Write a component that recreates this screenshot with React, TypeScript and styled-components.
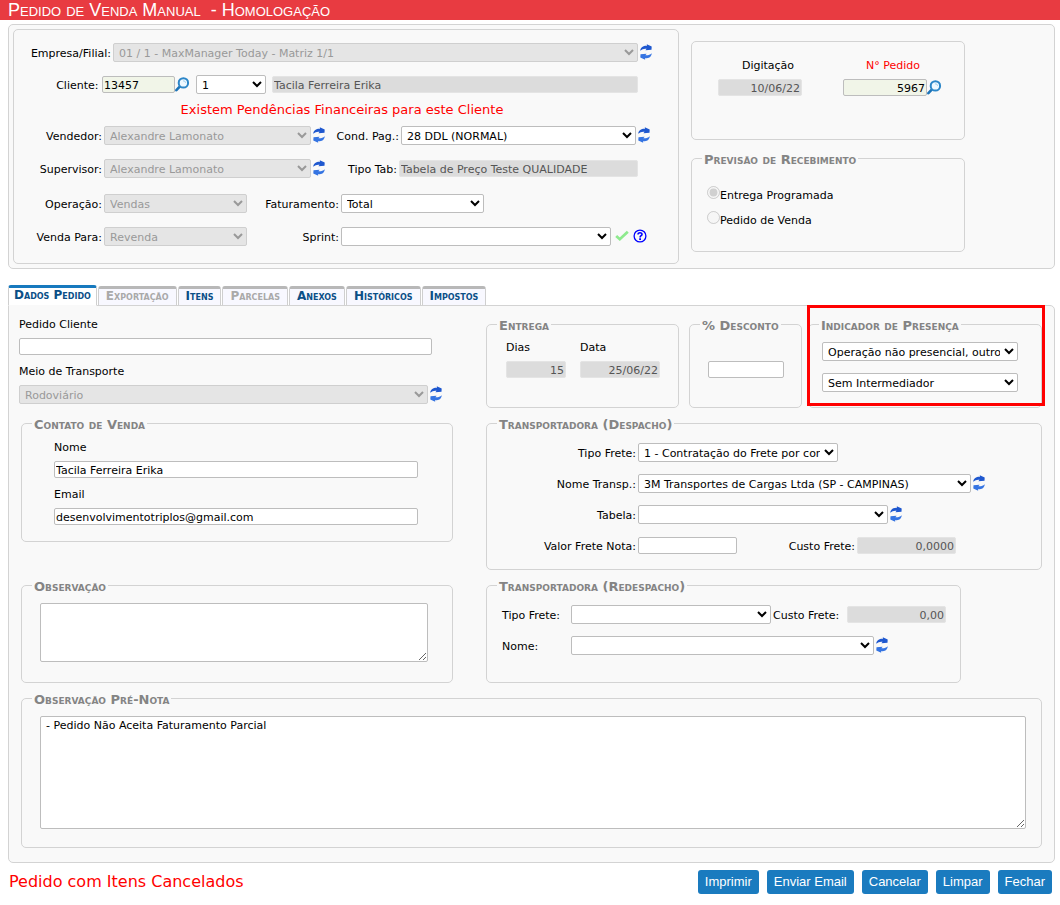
import React from "react";
import styled, { createGlobalStyle, css } from "styled-components";

const GlobalStyle = createGlobalStyle`
  *, *::before, *::after { box-sizing: border-box; }
  body {
    margin: 0;
    background: #fff;
    color: #000;
    font-family: Verdana, "DejaVu Sans", sans-serif;
    font-size: 11px;
    line-height: 16px;
  }
`;

const Header = styled.header`
  height: 20px;
  padding: 0 8px;
  background: #e83b41;
  color: #fff;
  h1 {
    margin: 0;
    font: 18px/20px "Liberation Sans", Arial, sans-serif;
    font-variant: small-caps;
    white-space: pre;
  }
`;

const Page = styled.main`
  padding: 4px 5px 10px 8px;
`;

const panel = css`
  border: 1px solid #d3d3d3;
  border-radius: 5px;
`;

const OrderPanel = styled.section`
  ${panel}
  background: #f9f9f9;
  padding: 4px;
  display: grid;
  grid-template-columns: minmax(0, 666px) minmax(0, 274px);
  column-gap: 12px;
`;

const CustomerPanel = styled.div`
  ${panel}
  padding: 13px 26px 17px 0;
`;

const SideColumn = styled.div`
  padding-top: 12px;
  display: flex;
  flex-direction: column;
  gap: 12px;
`;

const DatesPanel = styled.div`
  ${panel}
  display: flex;
  gap: 25px;
  padding: 15px 20px 43px 26px;
`;

const DateField = styled.div<{ $alert?: boolean }>`
  width: 100px;
  > label {
    display: block;
    padding-top: 1px;
    margin-bottom: 5px;
    text-align: center;
    color: ${(p) => (p.$alert ? "#f00" : "inherit")};
  }
`;

const Fieldset = styled.fieldset`
  ${panel}
  position: relative;
  min-width: 0;
  margin: 0;
  padding: 0;
`;

const Legend = styled.legend`
  margin-left: 10px;
  padding: 2px 2px 0;
  color: #848484;
  font-size: 13px;
  font-weight: bold;
  font-variant: small-caps;
  line-height: 11px;
  white-space: nowrap;
`;

const FieldsetBody = styled.div<{ $pad: string }>`
  padding: ${(p) => p.$pad};
`;

const LegendBox = ({
  title,
  pad,
  children,
  className,
}: {
  title: string;
  pad: string;
  children: React.ReactNode;
  className?: string;
}) => (
  <Fieldset className={className}>
    <Legend>{title}</Legend>
    <FieldsetBody $pad={pad}>{children}</FieldsetBody>
  </Fieldset>
);

const Row = styled.div<{ $gap?: number; $after?: number }>`
  display: flex;
  align-items: center;
  height: 19px;
  gap: ${(p) => p.$gap ?? 2}px;
  margin-bottom: ${(p) => p.$after ?? 0}px;
`;

const Rows = styled.div`
  display: grid;
  row-gap: 12px;
`;

const Group = styled.div`
  display: flex;
  align-items: center;
`;

const Label = styled.label<{ $w: number; $align?: "left" | "right" }>`
  flex: 0 0 ${(p) => p.$w}px;
  padding-top: 2px;
  text-align: ${(p) => p.$align ?? "right"};
  white-space: nowrap;
`;

const TopLabel = styled.label`
  display: block;
  padding-top: 1px;
  margin-bottom: 5px;
`;

const Stack = styled.div`
  display: grid;
  row-gap: 8px;
`;

const TextBox = styled.input<{ $w?: number; $end?: boolean; $key?: boolean }>`
  display: block;
  ${(p) => (p.$w ? `flex: 0 0 ${p.$w}px; width: ${p.$w}px;` : "flex: 1 1 0; width: 100%;")}
  min-width: 0;
  height: 17px;
  margin: 0;
  padding: 1px 1px 0;
  border: 1px solid #bdbdbd;
  border-radius: 2px;
  background: ${(p) => (p.$key ? "#f1f5e8" : "#fff")};
  color: #000;
  font: inherit;
  line-height: 14px;
  text-align: ${(p) => (p.$end ? "right" : "left")};
  &:read-only {
    border-color: #e4e4e4;
    background: #dcdcdc;
    color: #555;
  }
`;

const Select = styled.select<{ $w?: number }>`
  display: block;
  ${(p) => (p.$w ? `flex: 0 1 ${p.$w}px; width: ${p.$w}px;` : "flex: 1 1 0; width: 100%;")}
  min-width: 0;
  height: 19px;
  margin: 0;
  padding: 1px 1px 0;
  border: 1px solid #bdbdbd;
  border-radius: 2px;
  background-color: #fff;
  color: #000;
  font: inherit;
  &:disabled {
    opacity: 1;
    border-color: #cfcfcf;
    background-color: #e5e5e5;
    color: #999;
  }
`;

const TextArea = styled.textarea`
  display: block;
  width: 100%;
  margin: 0;
  padding: 1px 5px;
  border: 1px solid #bdbdbd;
  border-radius: 2px;
  background: #fff;
  font: inherit;
`;

const IconButton = styled.button<{ $w: number }>`
  flex: 0 0 ${(p) => p.$w}px;
  display: flex;
  justify-content: center;
  padding: 0 0 1px;
  border: 0;
  background: none;
  cursor: pointer;
  svg { display: block; flex: none; }
`;

const Notice = styled.p`
  margin: 0 0 6px;
  padding-left: 18px;
  color: #f00;
  font-size: 13px;
  line-height: 20px;
  text-align: center;
`;

const Choice = styled.label`
  display: flex;
  align-items: flex-start;
  height: 16px;
  margin-bottom: 9px;
  &:last-child { margin-bottom: 0; }
  input { width: 13px; height: 13px; margin: 0; }
  span { padding-top: 2px; }
`;

const TabBar = styled.div`
  display: flex;
  gap: 1px;
  margin-top: 16px;
`;

const Tab = styled.button<{ $active?: boolean }>`
  height: ${(p) => (p.$active ? 21 : 20)}px;
  margin: ${(p) => (p.$active ? "0 0 -1px" : "1px 0 -1px")};
  padding: 0 ${(p) => (p.$active ? 5 : 7)}px 3px;
  position: relative;
  border: 1px solid #cfcfcf;
  border-top: 3px solid ${(p) => (p.$active ? "#1779be" : "#b8b8b8")};
  border-bottom-color: ${(p) => (p.$active ? "#f9f9f9" : "#d3d3d3")};
  border-radius: 3px 3px 0 0;
  background: ${(p) => (p.$active ? "#fff" : "#f8f8ff")};
  color: #0b4f87;
  font-family: Verdana, "DejaVu Sans", sans-serif;
  font-size: 12px;
  font-weight: bold;
  font-variant: small-caps;
  line-height: 14px;
  white-space: nowrap;
  &:disabled { color: #a9a9a9; }
`;

const TabPanel = styled.section`
  ${panel}
  border-top-left-radius: 0;
  background: #f9f9f9;
  padding: 0 12px 14px 10px;
`;

const Columns = styled.div`
  display: grid;
  grid-template-columns: minmax(0, 434fr) minmax(0, 556fr);
  column-gap: 33px;
`;

const LeftColumn = styled.div`
  padding-top: 10px;
`;

const RightColumn = styled.div`
  padding-top: 12px;
  display: flex;
  flex-direction: column;
  gap: 9px;
`;

const TransportFields = styled(Stack)`
  padding-right: 11px;
  margin-bottom: 13px;
`;

const LeftBoxes = styled.div`
  display: grid;
  row-gap: 37px;
  margin-left: 2px;
`;

const InvoiceNote = styled.div`
  margin: 9px 0 0 2px;
`;

const Trio = styled.div`
  display: grid;
  grid-template-columns: 193px 113px minmax(0, 1fr);
`;

const DiscountBox = styled(LegendBox)`
  margin: 0 0 0 10px;
  width: 113px;
`;

const PresenceBox = styled(LegendBox)`
  margin-left: 16px;
`;

const DeliveryFields = styled.div`
  display: grid;
  grid-template-columns: 60px 80px;
  column-gap: 14px;
`;

const Spotlight = styled.div`
  position: absolute;
  inset: -26px -4px 1px -2px;
  border: 3px solid #f00;
  pointer-events: none;
`;

const RedispatchBox = styled(LegendBox)`
  width: 475px;
  max-width: 100%;
`;

const Footer = styled.footer`
  display: flex;
  justify-content: space-between;
  align-items: center;
  height: 24px;
  margin-top: 7px;
  padding: 0 3px 0 1px;
  p { margin: 0; color: #f00; font-size: 16px; line-height: 24px; }
`;

const Actions = styled.div`
  display: flex;
  gap: 8px;
`;

const ActionButton = styled.button`
  height: 24px;
  padding: 0 7px;
  border: 0;
  border-radius: 3px;
  background: #1a7bbf;
  color: #fff;
  font: 13px/24px "Liberation Sans", Arial, sans-serif;
  cursor: pointer;
`;

const Refresh = ({ label }: { label: string }) => (
  <IconButton type="button" $w={12} aria-label={label}>
    <svg width="12" height="16" viewBox="0 0 12 16">
      <path d="M0.2 6.8 C0.6 3 3.4 1.5 7 1.7 L6.8 0.2 L11.7 2.6 L11.5 5.8 L5.4 6.2 L6.6 4.8 C4.4 4.4 2.2 5 0.2 6.8 Z" fill="#1f58cf" />
      <path d="M11.8 9.2 C11.4 13 8.6 14.5 5 14.3 L5.2 15.8 L0.3 13.4 L0.5 10.2 L6.6 9.8 L5.4 11.2 C7.6 11.6 9.8 11 11.8 9.2 Z" fill="#3574e2" />
    </svg>
  </IconButton>
);

const Search = ({ label }: { label: string }) => (
  <IconButton type="button" $w={15} aria-label={label}>
    <svg width="15" height="15" viewBox="0 0 15 15" fill="none">
      <path d="M5.2 9.2 L1.4 13.2" stroke="#1d74b8" strokeWidth="2.6" strokeLinecap="round" />
      <circle cx="8.4" cy="5.9" r="4.7" fill="#eef8ff" stroke="#2c86c8" strokeWidth="2" />
      <path d="M8 3.8 A2.4 2.4 0 0 1 10.6 5.8" stroke="#9fd0f0" strokeWidth="1" />
    </svg>
  </IconButton>
);

const Check = () => (
  <IconButton type="button" $w={18} aria-label="Confirmar sprint">
    <svg width="14" height="12" viewBox="0 0 14 12" fill="none">
      <path d="M1.2 6 L4.8 9.2 L12.8 1.8" stroke="#8eea8e" strokeWidth="2.8" />
    </svg>
  </IconButton>
);

const Help = () => (
  <IconButton type="button" $w={12} aria-label="Ajuda">
    <svg width="14" height="14" viewBox="0 0 14 14" fill="none" stroke="#00f">
      <circle cx="7" cy="7" r="5.9" strokeWidth="1.3" />
      <path d="M5 5.6 C5 3.2 9 3.2 9 5.4 C9 6.8 7.1 6.7 7.1 8.4" strokeWidth="1.6" />
      <path d="M6.2 10.1 H8" strokeWidth="1.6" />
    </svg>
  </IconButton>
);

type PickProps = { id: string; value?: string; w?: number; disabled?: boolean; label?: string };
const Pick = ({ id, value = "", w, disabled, label }: PickProps) => (
  <Select id={id} $w={w} disabled={disabled} defaultValue={value} aria-label={label}>
    <option>{value}</option>
  </Select>
);

const tabs = [
  { name: "Dados Pedido", active: true },
  { name: "Exportação", disabled: true },
  { name: "Itens" },
  { name: "Parcelas", disabled: true },
  { name: "Anexos" },
  { name: "Históricos" },
  { name: "Impostos" },
];

const CustomerForm = () => (
  <CustomerPanel>
    <Row $after={13}>
      <Label $w={97} htmlFor="empresa">Empresa/Filial:</Label>
      <Pick id="empresa" value="01 / 1 - MaxManager Today - Matriz 1/1" w={525} disabled />
      <Refresh label="Atualizar empresas" />
    </Row>
    <Row $gap={6} $after={6}>
      <Group>
        <Label $w={88} htmlFor="cliente">Cliente:&nbsp;</Label>
        <TextBox id="cliente" $w={73} $key defaultValue="13457" />
        <Search label="Buscar cliente" />
      </Group>
      <Pick id="loja" value="1" w={70} label="Loja" />
      <TextBox aria-label="Nome do cliente" $w={366} readOnly value="Tacila Ferreira Erika" />
    </Row>
    <Notice>Existem Pendências Financeiras para este Cliente</Notice>
    <Row $after={14}>
      <Label $w={88} htmlFor="vendedor">Vendedor:</Label>
      <Pick id="vendedor" value="Alexandre Lamonato" w={207} disabled />
      <Refresh label="Atualizar vendedores" />
      <Label $w={72} htmlFor="cond">Cond. Pag.:</Label>
      <Pick id="cond" value="28 DDL (NORMAL)" w={235} />
      <Refresh label="Atualizar condições" />
    </Row>
    <Row $after={16}>
      <Label $w={88} htmlFor="supervisor">Supervisor:</Label>
      <Pick id="supervisor" value="Alexandre Lamonato" w={207} disabled />
      <Refresh label="Atualizar supervisores" />
      <Label $w={70} htmlFor="tipotab">Tipo Tab:</Label>
      <TextBox id="tipotab" $w={239} readOnly value="Tabela de Preço Teste QUALIDADE" />
    </Row>
    <Row $after={14}>
      <Label $w={88} htmlFor="operacao">Operação:</Label>
      <Pick id="operacao" value="Vendas" w={143} disabled />
      <Label $w={90} htmlFor="faturamento">Faturamento:</Label>
      <Pick id="faturamento" value="Total" w={143} />
    </Row>
    <Row>
      <Label $w={88} htmlFor="vendapara">Venda Para:</Label>
      <Pick id="vendapara" value="Revenda" w={143} disabled />
      <Label $w={90} htmlFor="sprint">Sprint:</Label>
      <Pick id="sprint" w={270} />
      <Check />
      <Help />
    </Row>
  </CustomerPanel>
);

const SidePanels = () => (
  <SideColumn>
    <DatesPanel>
      <DateField>
        <label htmlFor="digitacao">Digitação</label>
        <TextBox id="digitacao" $w={84} $end readOnly value="10/06/22" />
      </DateField>
      <DateField $alert>
        <label htmlFor="pedido">N° Pedido</label>
        <Group>
          <TextBox id="pedido" $w={84} $end $key defaultValue="5967" />
          <Search label="Buscar pedido" />
        </Group>
      </DateField>
    </DatesPanel>
    <LegendBox title="Previsão de Recebimento" pad="21px 15px 24px">
      <Choice>
        <input type="radio" name="previsao" defaultChecked disabled />
        <span>Entrega Programada</span>
      </Choice>
      <Choice>
        <input type="radio" name="previsao" disabled />
        <span>Pedido de Venda</span>
      </Choice>
    </LegendBox>
  </SideColumn>
);

const OrderData = () => (
  <TabPanel>
    <Columns>
      <LeftColumn>
        <TransportFields>
          <div>
            <TopLabel htmlFor="pedcliente">Pedido Cliente</TopLabel>
            <Group>
              <TextBox id="pedcliente" $w={413} />
            </Group>
          </div>
          <div>
            <TopLabel htmlFor="meio">Meio de Transporte</TopLabel>
            <Row>
              <Pick id="meio" value="Rodoviário" w={409} disabled />
              <Refresh label="Atualizar meios de transporte" />
            </Row>
          </div>
        </TransportFields>
        <LeftBoxes>
          <LegendBox title="Contato de Venda" pad="9px 34px 16px 32px">
            <Stack>
              <div>
                <TopLabel htmlFor="nome">Nome</TopLabel>
                <TextBox id="nome" defaultValue="Tacila Ferreira Erika" />
              </div>
              <div>
                <TopLabel htmlFor="email">Email</TopLabel>
                <TextBox id="email" type="email" defaultValue="desenvolvimentotriplos@gmail.com" />
              </div>
            </Stack>
          </LegendBox>
          <LegendBox title="Observação" pad="11px 24px 20px 18px">
            <ObservationArea aria-label="Observação" />
          </LegendBox>
        </LeftBoxes>
      </LeftColumn>
      <RightColumn>
        <Trio>
          <LegendBox title="Entrega" pad="8px 18px 29px 19px">
            <DeliveryFields>
              <div>
                <TopLabel htmlFor="dias">Dias</TopLabel>
                <TextBox id="dias" $end readOnly value="15" />
              </div>
              <div>
                <TopLabel htmlFor="data">Data</TopLabel>
                <TextBox id="data" $end readOnly value="25/06/22" />
              </div>
            </DeliveryFields>
          </LegendBox>
          <DiscountBox title="% Desconto" pad="30px 17px 29px 18px">
            <TextBox aria-label="% Desconto" />
          </DiscountBox>
          <PresenceBox title="Indicador de Presença" pad="11px 23px 15px 13px">
            <Rows>
              <Pick id="presenca" value="Operação não presencial, outros" label="Indicador de presença" />
              <Pick id="intermediador" value="Sem Intermediador" label="Intermediador" />
            </Rows>
            <Spotlight />
          </PresenceBox>
        </Trio>
        <LegendBox title="Transportadora (Despacho)" pad="13px 0 14px">
          <Rows>
            <Row>
              <Label $w={149} htmlFor="tipofrete">Tipo Frete:</Label>
              <Pick id="tipofrete" value="1 - Contratação do Frete por conta do Remetente" w={200} />
            </Row>
            <Row>
              <Label $w={149} htmlFor="transp">Nome Transp.:</Label>
              <Pick id="transp" value="3M Transportes de Cargas Ltda (SP - CAMPINAS)" w={333} />
              <Refresh label="Atualizar transportadoras" />
            </Row>
            <Row>
              <Label $w={149} htmlFor="tabela">Tabela:</Label>
              <Pick id="tabela" w={250} />
              <Refresh label="Atualizar tabelas" />
            </Row>
            <Row>
              <Label $w={149} htmlFor="valorfrete">Valor Frete Nota:</Label>
              <TextBox id="valorfrete" $w={99} />
              <Label $w={116} htmlFor="custofrete">Custo Frete:</Label>
              <TextBox id="custofrete" $w={99} $end readOnly value="0,0000" />
            </Row>
          </Rows>
        </LegendBox>
        <RedispatchBox title="Transportadora (Redespacho)" pad="13px 13px 27px 15px">
          <Rows>
            <Row>
              <Label $w={67} $align="left" htmlFor="tipofrete2">Tipo Frete:</Label>
              <Pick id="tipofrete2" w={200} />
              <Label $w={72} $align="left" htmlFor="custofrete2">Custo Frete:</Label>
              <TextBox id="custofrete2" $w={99} $end readOnly value="0,00" />
            </Row>
            <Row>
              <Label $w={67} $align="left" htmlFor="nome2">Nome:</Label>
              <Pick id="nome2" w={303} />
              <Refresh label="Atualizar nomes" />
            </Row>
          </Rows>
        </RedispatchBox>
      </RightColumn>
    </Columns>
    <InvoiceNote>
      <LegendBox title="Observação Pré-Nota" pad="11px 15px 18px 18px">
        <InvoiceArea aria-label="Observação Pré-Nota" defaultValue="- Pedido Não Aceita Faturamento Parcial" />
      </LegendBox>
    </InvoiceNote>
  </TabPanel>
);

const ObservationArea = styled(TextArea)`
  height: 59px;
`;

const InvoiceArea = styled(TextArea)`
  height: 113px;
`;

export default function App() {
  return (
    <>
      <GlobalStyle />
      <Header>
        <h1>{"Pedido de Venda Manual  - Homologação"}</h1>
      </Header>
      <Page>
        <OrderPanel>
          <CustomerForm />
          <SidePanels />
        </OrderPanel>
        <TabBar role="tablist">
          {tabs.map((t) => (
            <Tab key={t.name} type="button" role="tab" aria-selected={!!t.active} $active={t.active} disabled={t.disabled}>
              {t.name}
            </Tab>
          ))}
        </TabBar>
        <OrderData />
        <Footer>
          <p>Pedido com Itens Cancelados</p>
          <Actions>
            {["Imprimir", "Enviar Email", "Cancelar", "Limpar", "Fechar"].map((a) => (
              <ActionButton key={a} type="button">{a}</ActionButton>
            ))}
          </Actions>
        </Footer>
      </Page>
    </>
  );
}
